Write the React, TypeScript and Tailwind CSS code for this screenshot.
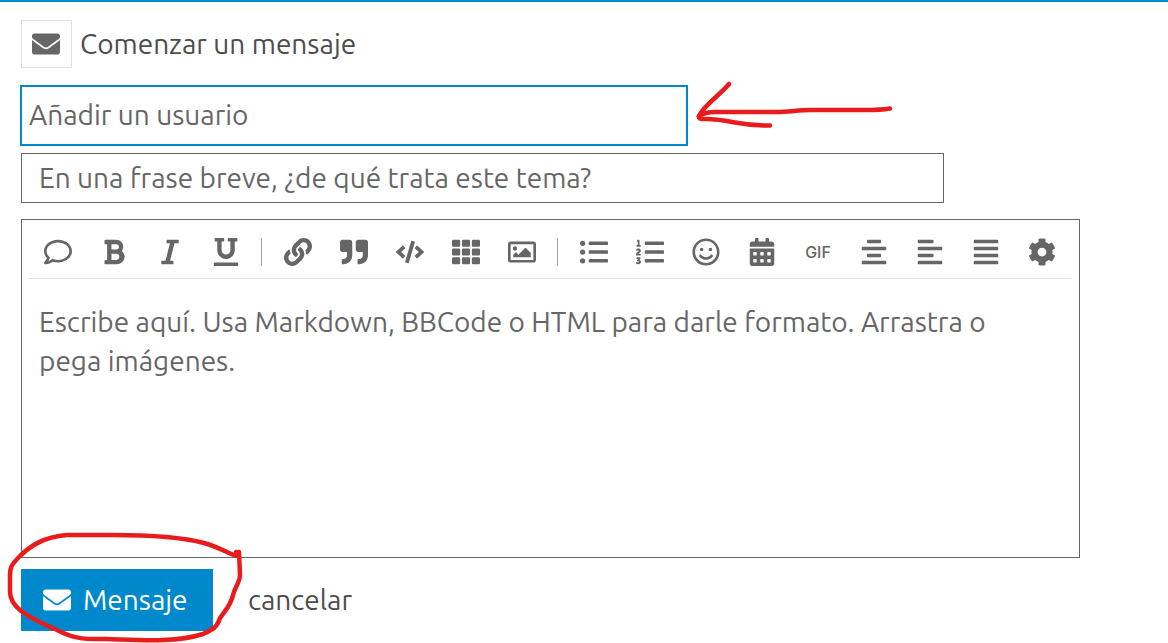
import { useState } from 'react';
import type { IconType } from 'react-icons';
import {
  FaAlignCenter,
  FaAlignJustify,
  FaAlignLeft,
  FaBold,
  FaCalendarAlt,
  FaCode,
  FaCog,
  FaEnvelope,
  FaItalic,
  FaLink,
  FaListOl,
  FaListUl,
  FaQuoteRight,
  FaRegComment,
  FaRegImage,
  FaRegSmile,
  FaTh,
  FaUnderline,
} from 'react-icons/fa';

type Tool = { label: string; icon?: IconType; text?: string };

const toolGroups: Tool[][] = [
  [
    { label: 'Cita', icon: FaRegComment },
    { label: 'Negrita', icon: FaBold },
    { label: 'Cursiva', icon: FaItalic },
    { label: 'Subrayado', icon: FaUnderline },
  ],
  [
    { label: 'Hipervínculo', icon: FaLink },
    { label: 'Bloque de cita', icon: FaQuoteRight },
    { label: 'Código', icon: FaCode },
    { label: 'Cuadrícula', icon: FaTh },
    { label: 'Imagen', icon: FaRegImage },
  ],
  [
    { label: 'Lista con viñetas', icon: FaListUl },
    { label: 'Lista numerada', icon: FaListOl },
    { label: 'Emoji', icon: FaRegSmile },
    { label: 'Fecha', icon: FaCalendarAlt },
    { label: 'Insertar GIF', text: 'GIF' },
    { label: 'Centrar', icon: FaAlignCenter },
    { label: 'Alinear a la izquierda', icon: FaAlignLeft },
    { label: 'Justificar', icon: FaAlignJustify },
    { label: 'Opciones', icon: FaCog },
  ],
];

function Toolbar() {
  return (
    <div className="mr-2 ml-[7px] flex h-[59px] items-center border-b border-[#e3e3e3] pt-1.5 pl-px">
      {toolGroups.map((group, i) => (
        <div key={i} className="flex items-center">
          {i > 0 && <span className="mr-2 ml-[7px] h-7 w-px bg-[#a0a0a0]" />}
          {group.map(({ label, icon: Icon, text }) => (
            <button
              key={label}
              type="button"
              aria-label={label}
              className="flex h-12 w-14 items-center justify-center text-[#666666] hover:bg-gray-100"
            >
              {Icon ? <Icon size={28} /> : <span className="font-['Inter',sans-serif] text-base font-medium">{text}</span>}
            </button>
          ))}
        </div>
      ))}
    </div>
  );
}

// Hand-drawn arrow pointing at the user field
function ArrowMark() {
  return (
    <svg
      className="pointer-events-none absolute top-[-6px] left-full ml-2 h-[50px] w-[200px]"
      viewBox="695 80 200 50"
      fill="none"
      stroke="#e81c1c"
      strokeWidth="4.500"
      strokeLinecap="round"
      strokeLinejoin="round"
      aria-hidden="true"
    >
      <path d="M729 84 C720 95 703 106 699 116 C704 113 709 111.500 717 112 L775 112 C789 112 798 110 810 110 L865 110 C876 110 884 109.500 890 108.500" />
      <path d="M699 116 C698 120 704 118.500 715 119.500 C734 121 742 126 770 125.500" />
    </svg>
  );
}

// Hand-drawn loop around the send button
function CircleMark() {
  return (
    <svg
      className="pointer-events-none absolute top-[-38px] left-[-17px] h-[112px] w-[244px]"
      viewBox="4 531 244 112"
      fill="none"
      stroke="#e81c1c"
      strokeWidth="4.500"
      strokeLinecap="round"
      strokeLinejoin="round"
      aria-hidden="true"
    >
      <path d="M236 552 C239 553 240 555 238 556 C232 556 222 548 204 543 C178 536 142 535 112 535 L67 535 C43 537 30 546 19 557 C11 565 10 568 10 576 L10 592 C10 599 15 606 21 611 C33 620 46 625 59 631 C77 640 89 639 106 639 C139 640 175 643 203 634 C214 629 217 627 220 618 C225 611 231 605 233 595 C235 587 240 582 240 575 L239 552" />
    </svg>
  );
}

export default function App() {
  const [user, setUser] = useState('');
  const [title, setTitle] = useState('');
  const [body, setBody] = useState('');

  return (
    <form
      onSubmit={(e) => e.preventDefault()}
      className="overflow-hidden border-t-2 border-[#0088cc] bg-white pt-[18px] pr-[88px] pb-3 pl-[21px] font-['Ubuntu','Noto_Sans',sans-serif] text-[28px] leading-[39px] text-[#4d4d4d]"
    >
      <div className="flex items-center gap-2">
        <button
          type="button"
          aria-label="Tipo de mensaje"
          className="flex h-12 w-[51px] items-center border border-[#e3e3e3] pl-2.5 text-[#666666]"
        >
          <FaEnvelope size={28} />
        </button>
        <h1 className="pb-0.5">Comenzar un mensaje</h1>
      </div>

      <div className="relative mt-[18px] w-full max-w-[666px]">
        <input
          type="text"
          aria-label="Añadir un usuario"
          placeholder="Añadir un usuario"
          value={user}
          onChange={(e) => setUser(e.target.value)}
          className="block h-[59px] w-full border border-[#0088cc] px-[7px] pb-0.5 ring-1 ring-[#0088cc] outline-none placeholder:text-[#666666]"
        />
        <ArrowMark />
      </div>

      <input
        type="text"
        aria-label="Título"
        placeholder="En una frase breve, ¿de qué trata este tema?"
        value={title}
        onChange={(e) => setTitle(e.target.value)}
        className="mt-2 block h-[50px] w-full max-w-[923px] border border-[#666666] px-[17px] pb-0.5 outline-none placeholder:text-[#666666]"
      />

      <div className="mt-4 border border-[#666666]">
        <Toolbar />
        <textarea
          aria-label="Mensaje"
          placeholder="Escribe aquí. Usa Markdown, BBCode o HTML para darle formato. Arrastra o pega imágenes."
          value={body}
          onChange={(e) => setBody(e.target.value)}
          className="block h-[278px] w-full resize-none pt-[23px] pr-9 pl-[17px] outline-none placeholder:text-[#666666]"
        />
      </div>

      <div className="relative mt-[11px] flex items-center gap-[35px]">
        <button
          type="submit"
          className="flex h-[62px] w-48 items-center gap-3 bg-[#0088cc] pl-[22px] text-white hover:bg-[#006da3]"
        >
          <FaEnvelope size={28} />
          <span className="pb-0.5">Mensaje</span>
        </button>
        <button type="button" className="pb-0.5 hover:underline">
          cancelar
        </button>
        <CircleMark />
      </div>
    </form>
  );
}
